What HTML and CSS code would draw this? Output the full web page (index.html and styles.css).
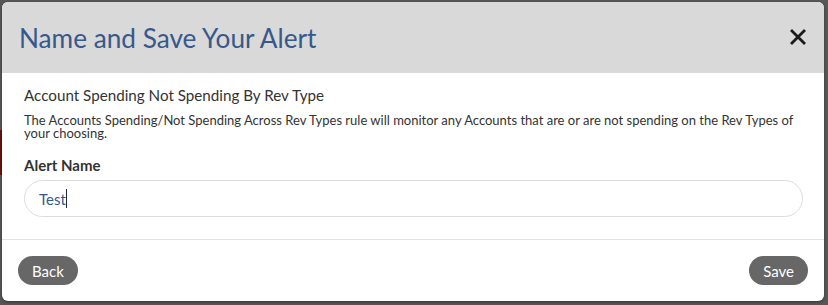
FILE: index.html
```html
<!DOCTYPE html>
<html>
<head>
<meta charset="utf-8">
<link rel="stylesheet" href="styles.css">
</head>
<body>
<div class="backdrop">
  <div class="modal">
    <div class="modal-header">
      <h1 class="modal-title">Name and Save Your Alert</h1>
      <button class="close" aria-label="Close">
        <svg width="16" height="16" viewBox="0 0 16 16"><path d="M2 2 L14 14 M14 2 L2 14" stroke="#1a1a1a" stroke-width="2.8" stroke-linecap="square"/></svg>
      </button>
    </div>
    <div class="modal-body">
      <div class="rule-name">Account Spending Not Spending By Rev Type</div>
      <p class="rule-desc">The Accounts Spending/Not Spending Across Rev Types rule will monitor any Accounts that are or are not spending on the Rev Types of your choosing.</p>
      <label class="field-label">Alert Name</label>
      <div class="input">Test<span class="caret"></span></div>
    </div>
    <div class="modal-footer">
      <button class="btn">Back</button>
      <button class="btn">Save</button>
    </div>
  </div>
</div>
</body>
</html>
```
FILE: styles.css
```css
html, body {
  margin: 0;
  padding: 0;
  height: 100%;
}
body {
  background: #575757;
  font-family: Lato, "Open Sans", sans-serif;
  overflow: hidden;
}
.backdrop {
  padding: 2px 4px 0 2px;
  background: linear-gradient(to bottom, #575757 0, #575757 130px, #6b1010 130px, #6b1010 175px, #575757 175px);
  background-size: 2px 100%;
  background-repeat: no-repeat;
  background-color: #575757;
  height: 100%;
  box-sizing: border-box;
}
.modal {
  width: 822px;
  height: 299px;
  background: #fff;
  border-radius: 6px;
  overflow: hidden;
  display: flex;
  flex-direction: column;
  box-shadow: 0 1px 3px rgba(0,0,0,0.4);
}
.modal-header {
  background: #d9d9d9;
  height: 71px;
  display: flex;
  align-items: center;
  justify-content: space-between;
  padding: 0 18px 2px 17px;
  box-sizing: border-box;
}
.modal-title {
  margin: 0;
  font-weight: 400;
  font-size: 26.2px;
  color: #36588a;
  padding-top: 3px;
}
.close {
  border: 0;
  background: none;
  padding: 0;
  width: 16px;
  height: 16px;
  display: flex;
}
.modal-body {
  padding: 12px 21px 0 22px;
  color: #333;
  height: 167px;
  box-sizing: border-box;
  border-bottom: 1px solid #e3e3e3;
}
.rule-name {
  font-size: 15.2px;
  line-height: 20px;
}
.rule-desc {
  margin: 9px 0 0;
  font-size: 13px;
  line-height: 13px;
}
.field-label {
  display: block;
  margin-top: 15px;
  font-size: 15px;
  font-weight: 700;
  line-height: 20px;
}
.input {
  margin-top: 5px;
  height: 37px;
  box-sizing: border-box;
  border: 1px solid #dcdcdc;
  border-radius: 19px;
  padding: 0 14px;
  display: flex;
  align-items: center;
  font-size: 15px;
  color: #36588a;
}
.caret {
  display: inline-block;
  width: 1px;
  height: 19px;
  background: #1a2a4a;
  margin-left: 0;
}
.modal-footer {
  display: flex;
  justify-content: space-between;
  align-items: center;
  padding: 16px 16px 0 16px;
}
.btn {
  border: 0;
  background: #676767;
  color: #fff;
  font-family: Lato, "Open Sans", sans-serif;
  font-size: 15px;
  height: 29px;
  padding: 0 14px;
  border-radius: 15px;
}
```
